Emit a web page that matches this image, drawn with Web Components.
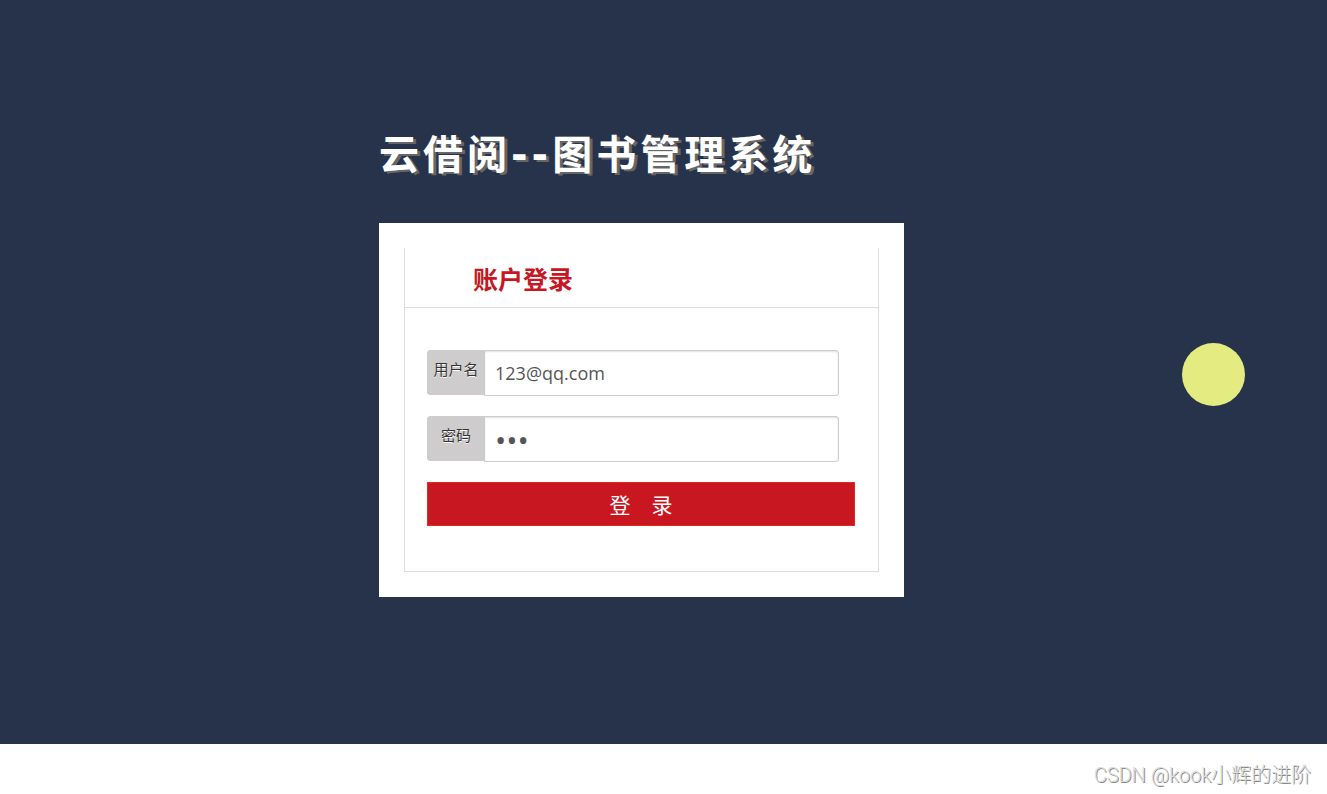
<!DOCTYPE html>
<html lang="zh-CN">
<head>
<meta charset="utf-8">
<meta name="viewport" content="width=device-width, initial-scale=1">
<title>云借阅--图书管理系统</title>
<style>
  html, body { margin: 0; }
  body { font-family: "Open Sans", "Noto Sans CJK SC", sans-serif; background: #fff; }
</style>
</head>
<body>
<login-page>
  <page-title>云借阅--图书管理系统</page-title>
  <login-card heading="账户登录"></login-card>
  <pointer-spot slot="overlay"></pointer-spot>
  <page-credit slot="footer">CSDN @kook小辉的进阶</page-credit>
</login-page>

<script>
const define = (name, html, setup) => {
  const template = document.createElement("template");
  template.innerHTML = html;
  customElements.define(name, class extends HTMLElement {
    constructor() {
      super();
      this.attachShadow({ mode: "open" }).append(template.content.cloneNode(true));
    }
    connectedCallback() { if (setup) setup(this, this.shadowRoot); }
  });
};

define("login-page", `
  <style>
    :host { display: flex; flex-direction: column; min-height: 100vh; }
    main { position: relative; flex: 1; background: #27334a; }
    .column { box-sizing: border-box; max-width: 569px; margin: 0 auto; padding: 125px 44px 48px 0; }
  </style>
  <main><div class="column"><slot></slot></div><slot name="overlay"></slot></main>
  <slot name="footer"></slot>`);

define("page-title", `
  <style>
    :host { display: block; margin-bottom: 38px; }
    h1 { margin: 0; color: #fff; white-space: nowrap; letter-spacing: 4px;
      font: bold 40px/60px "DejaVu Sans", "Noto Sans CJK SC", sans-serif;
      text-shadow: 3px 2px 0 #666; }
  </style>
  <h1><slot></slot></h1>`);

define("login-card", `
  <style>
    :host { display: block; padding: 25px; background: #fff; }
    form { margin: 0; border: 1px solid #ddd; border-top: 0; }
    h2 { margin: 0; padding: 11px 68px 8px; border-bottom: 1px solid #ddd; color: #c81623;
      font-size: 25px; line-height: 40px; }
    .body { display: grid; grid-template-columns: minmax(0, 1fr); gap: 20px; padding: 42px 23px 45px 22px; }
  </style>
  <form>
    <h2></h2>
    <div class="body">
      <form-field label="用户名" type="text" value="123@qq.com"></form-field>
      <form-field label="密码" type="password" value="123"></form-field>
      <submit-button>登&emsp;录</submit-button>
    </div>
  </form>`, (host, root) => {
    root.querySelector("h2").textContent = host.getAttribute("heading");
  });

define("form-field", `
  <style>
    :host { display: flex; align-items: flex-start; margin-right: 16px; }
    label { box-sizing: border-box; flex: none; width: 58px; height: 45px; margin-right: -1px; padding-top: 8px;
      border: 1px solid #ccc; border-radius: 3px 0 0 3px; background: #cecccd; color: #333;
      font-size: 15px; line-height: 20px; text-align: center; text-shadow: 0 1px 0 #fff; white-space: nowrap; }
    input { box-sizing: border-box; flex: 1; min-width: 0; height: 46px; margin: 0; padding: 0 10px;
      border: 1px solid #ccc; border-radius: 0 3px 3px 0; background: #fff; color: #555; outline: 0;
      box-shadow: inset 0 1px 2px rgba(0, 0, 0, .12);
      font: 18px/24px "Open Sans", "Noto Sans CJK SC", sans-serif; }
    input[type="password"] { font-size: 30px; }
  </style>
  <label for="control"></label><input id="control">`, (host, root) => {
    root.querySelector("label").textContent = host.getAttribute("label");
    const input = root.querySelector("input");
    input.type = host.getAttribute("type");
    input.value = host.getAttribute("value");
  });

define("submit-button", `
  <style>
    :host { display: block; }
    button { display: block; box-sizing: border-box; width: 100%; height: 44px; margin: 0; padding: 0;
      border: 1px solid #e4281d; border-radius: 0; background: #c81720; color: #fff;
      font: 21px/40px "Noto Sans CJK SC", sans-serif; cursor: pointer; }
  </style>
  <button type="button"><slot></slot></button>`);

define("pointer-spot", `
  <style>
    :host { position: absolute; top: 343px; right: 82px; width: 63px; height: 63px;
      border-radius: 50%; background: #e4eb80; }
  </style>`);

define("page-credit", `
  <style>
    :host { display: block; padding: 16px 16px 4px; text-align: right; color: #ddd;
      font: 300 20px/30px Roboto, "Noto Sans CJK SC", sans-serif; text-shadow: 1px 1px 0 #888; }
  </style>
  <slot></slot>`);
</script>
</body>
</html>
